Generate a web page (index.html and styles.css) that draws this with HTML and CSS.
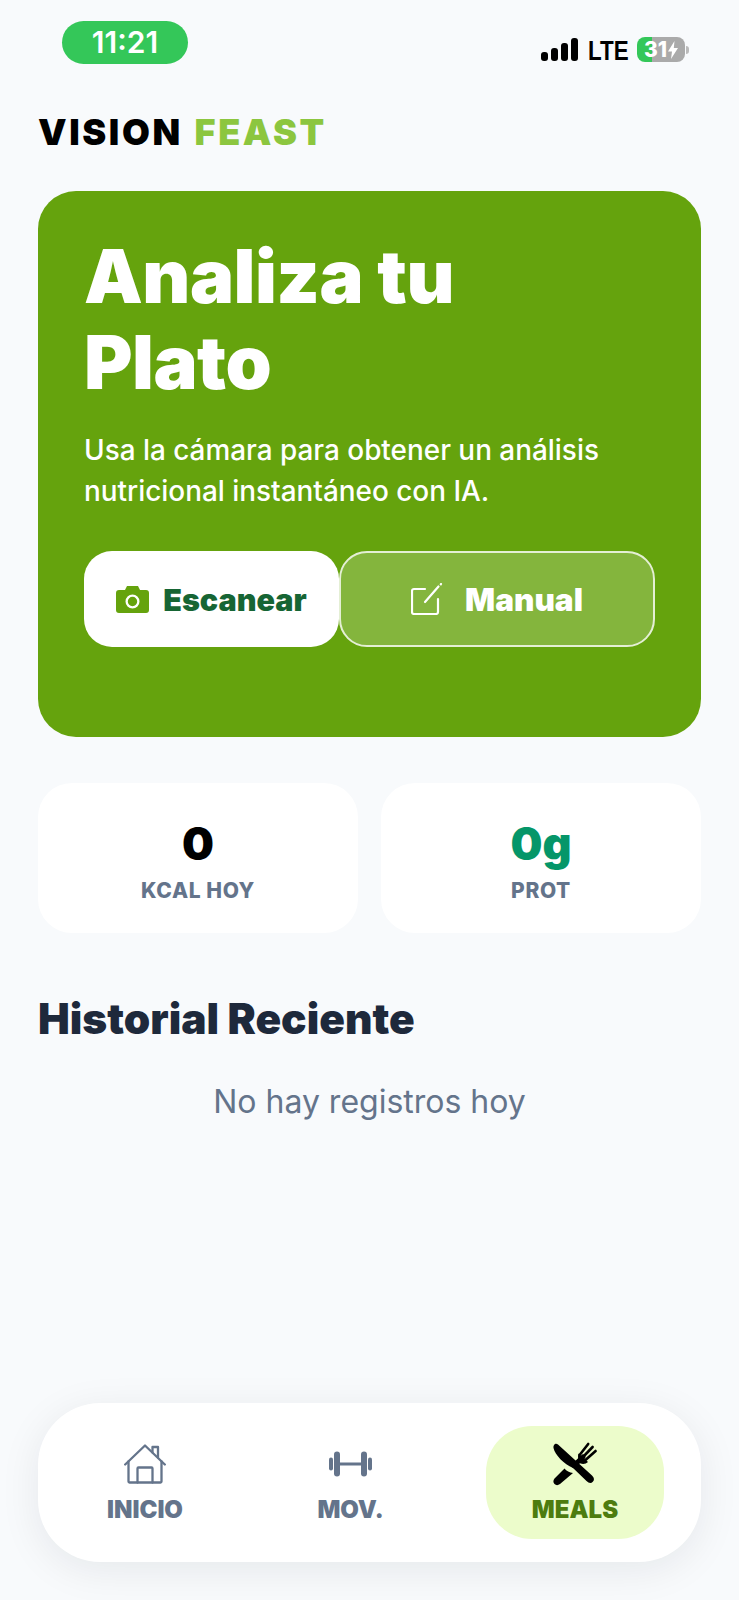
FILE: index.html
```html
<!DOCTYPE html>
<html lang="es">

<head>
    <meta charset="UTF-8">
    <title>Vision Feast</title>
    <link rel="stylesheet" href="styles.css">
</head>

<body>
    <div class="status-bar">
        <div class="clock">11:21</div>
        <div class="status-right">
            <div class="signal">
                <span class="bar bar-1"></span>
                <span class="bar bar-2"></span>
                <span class="bar bar-3"></span>
                <span class="bar bar-4"></span>
            </div>
            <span class="lte">LTE</span>
            <div class="battery">
                <span>31</span>
                <svg viewBox="0 0 10 18" width="10" height="18">
                    <path d="M6.500 0 0 10.500h4L3 18l7-11H5.800z" fill="#fff" />
                </svg>
            </div>
            <span class="battery-nub"></span>
        </div>
    </div>

    <header class="logo">VISION <span>FEAST</span></header>

    <section class="hero">
        <h1>Analiza tu<br>Plato</h1>
        <p>Usa la cámara para obtener un análisis nutricional instantáneo con IA.</p>
        <div class="hero-actions">
            <button class="btn btn-scan">
                <svg viewBox="0 0 33 27" width="33" height="27">
                    <path fill="#65a30d" fill-rule="evenodd" d="M3 4h6l2-4h11l2 4h6a3 3 0 0 1 3 3v17a3 3 0 0 1-3 3H3a3 3 0 0 1-3-3V7a3 3 0 0 1 3-3zm13.500 4.500a7 7 0 1 0 0 14 7 7 0 0 0 0-14zm0 2.300a4.700 4.700 0 1 1 0 9.400 4.700 4.700 0 0 1 0-9.400z" />
                </svg>
                Escanear
            </button>
            <button class="btn btn-manual">
                <svg viewBox="0 0 32 32" width="32" height="32" fill="none" stroke="#fff" stroke-width="2.200" stroke-linecap="round" stroke-linejoin="round">
                    <path d="M14 6H3a2 2 0 0 0-2 2v21a2 2 0 0 0 2 2h22a2 2 0 0 0 2-2V16" />
                    <path d="M14 19 27.500 3.500" />
                    <path d="M29.800 1.300 30 1" />
                </svg>
                Manual
            </button>
        </div>
    </section>

    <section class="stats">
        <div class="stat">
            <div class="stat-value">0</div>
            <div class="stat-label">KCAL HOY</div>
        </div>
        <div class="stat">
            <div class="stat-value green">0g</div>
            <div class="stat-label">PROT</div>
        </div>
    </section>

    <h2>Historial Reciente</h2>
    <p class="empty">No hay registros hoy</p>

    <nav class="tabbar">
        <a class="tab tab-home">
            <svg viewBox="0 0 42 39" width="42" height="39" fill="none" stroke="#64748b" stroke-width="2.300" stroke-linejoin="round" stroke-linecap="round">
                <path d="M1.200 20 21 1l19.800 19" />
                <path d="M4.500 17v20a1 1 0 0 0 1 1h31a1 1 0 0 0 1-1V17" />
                <path d="M13.500 38V24a1 1 0 0 1 1-1h13a1 1 0 0 1 1 1v14" />
                <path d="M28.500 8V2.500h5.500V13" />
            </svg>
            INICIO
        </a>
        <a class="tab tab-move">
            <svg viewBox="0 0 43 25" width="43" height="25" fill="#64748b">
                <rect x="0" y="6" width="4" height="13" rx="2" />
                <rect x="5" y="0" width="6" height="25" rx="3" />
                <rect x="11" y="11" width="21" height="3" />
                <rect x="32" y="0" width="6" height="25" rx="3" />
                <rect x="39" y="6" width="4" height="13" rx="2" />
            </svg>
            MOV.
        </a>
        <a class="tab tab-meals">
            <svg viewBox="2 0 46 44" width="46" height="44">
                <g fill="none" stroke="#000" stroke-linecap="round">
                    <path stroke-width="5" d="M24 23.500 33 15" />
                    <path stroke-width="2.600" d="M30 12.500 38.200 2" />
                    <path stroke-width="2.600" d="M33 15 42.600 5" />
                    <path stroke-width="2.600" d="M35.500 18 45.600 9" />
                </g>
                <path d="M28.500 11.500 38 20c-2 2-5 2.500-7.500 1.500C28 20 27.500 14 28.500 11.500z" />
                <path d="M5 2c1-.5 2-.3 3 .5L42 33.500c2.500 2.500 2.500 4.500.8 6.300s-4 1.500-6.300-.8L23 26C14 22 5 13 3.500 6c-.3-1.600.3-3.200 1.500-4z" />
                <path d="M14.500 26.500c2 2.500 5 4 8.500 4.500L10 42c-2 1.500-4 1.500-5.500 0s-1.500-3.500 0-5.500z" />
            </svg>
            MEALS
        </a>
    </nav>
</body>

</html>
```

FILE: styles.css
```css
* {
    box-sizing: border-box;
}

body {
    margin: 0;
    min-height: 1600px;
    padding: 21px 38px 38px;
    display: flex;
    flex-direction: column;
    background: #f8fafc;
    font-family: Inter, "Noto Sans", sans-serif;
}

.status-bar {
    display: flex;
    justify-content: space-between;
    align-items: flex-start;
    padding-left: 24px;
    padding-right: 12px;
}

.clock {
    width: 126px;
    height: 43px;
    border-radius: 22px;
    background: #34c759;
    color: #fff;
    font-size: 30px;
    font-weight: 600;
    line-height: 43px;
    text-align: center;
}

.status-right {
    display: flex;
    align-items: center;
    margin-top: 16px;
}

.signal {
    display: flex;
    align-items: flex-end;
    gap: 3px;
    height: 23px;
}

.bar {
    width: 7px;
    border-radius: 3px;
    background: #000;
}

.bar-1 { height: 9px; }
.bar-2 { height: 13px; }
.bar-3 { height: 18px; }
.bar-4 { height: 23px; }

.lte {
    margin-left: 10px;
    margin-top: 2px;
    width: 49px;
    font-family: "Liberation Sans", sans-serif;
    font-size: 28px;
    font-weight: 700;
    line-height: 23px;
    transform: scaleX(.8);
    transform-origin: left center;
}

.battery {
    width: 48px;
    height: 25px;
    border-radius: 8px;
    display: flex;
    align-items: center;
    justify-content: center;
    gap: 1px;
    background: linear-gradient(to right, #34c759 15px, #aaaaaa 15px);
    color: #fff;
    font-size: 21px;
    font-weight: 800;
}

.battery-nub {
    width: 3px;
    height: 8px;
    margin-left: 1px;
    border-radius: 0 3px 3px 0;
    background: #bbb;
}

.logo {
    margin-top: 46px;
    font-size: 36px;
    font-weight: 900;
    line-height: 44px;
    letter-spacing: 2.600px;
    word-spacing: 2px;
    color: #000;
}

.logo span {
    color: #8cc63f;
}

.hero {
    margin-top: 37px;
    height: 546px;
    padding: 42px 46px;
    border-radius: 38px;
    background: #65a30d;
    color: #fff;
}

h1 {
    margin: 0;
    font-size: 74px;
    font-weight: 900;
    line-height: 86px;
    letter-spacing: -.5px;
}

.hero p {
    margin: 25px 0 0;
    font-size: 27.900px;
    font-weight: 500;
    line-height: 41px;
}

.hero-actions {
    display: flex;
    margin-top: 39px;
}

.btn {
    height: 96px;
    display: flex;
    align-items: center;
    justify-content: center;
    gap: 14px;
    border-radius: 28px;
    font-family: inherit;
    font-size: 30.500px;
    font-weight: 900;
}

.btn-scan {
    width: 255px;
    border: 0;
    background: #fff;
    color: #166534;
}

.btn-manual {
    width: 316px;
    gap: 22px;
    border: 2px solid #e4efd4;
    background: #84b53d;
    color: #fff;
    font-size: 31.500px;
}

.stats {
    display: grid;
    grid-template-columns: 1fr 1fr;
    gap: 23px;
    margin-top: 46px;
}

.stat {
    height: 150px;
    padding-top: 30px;
    border-radius: 34px;
    background: #fff;
    text-align: center;
}

.stat-value {
    font-size: 45px;
    font-weight: 900;
    line-height: 62px;
    color: #000;
}

.stat-value.green {
    color: #059669;
}

.stat-label {
    margin-top: 1px;
    font-size: 21px;
    font-weight: 800;
    line-height: 30px;
    letter-spacing: .6px;
    color: #64748b;
}

h2 {
    margin: 61px 0 0;
    font-size: 42.400px;
    font-weight: 900;
    line-height: 50px;
    color: #1e293b;
}

.empty {
    margin: 38px 0 0;
    font-size: 32px;
    line-height: 40px;
    text-align: center;
    color: #64748b;
}

.tabbar {
    margin-top: auto;
    height: 159px;
    padding: 23px 37px 23px 30px;
    display: flex;
    justify-content: space-between;
    border-radius: 62px;
    background: #fff;
    box-shadow: 0 8px 40px rgba(15, 23, 42, .08);
}

.tab {
    display: flex;
    flex-direction: column;
    align-items: center;
    justify-content: center;
    gap: 9px;
    width: 178px;
    height: 113px;
    font-size: 24px;
    font-weight: 900;
    color: #64748b;
}

.tab svg {
    height: 44px;
}

.tab-home {
    width: 150px;
    margin-left: 2px;
}

.tab-move {
    width: 150px;
    margin-right: 5px;
}

.tab-meals {
    border-radius: 46px;
    background: #ecfccb;
    color: #4d7c0f;
}
```
